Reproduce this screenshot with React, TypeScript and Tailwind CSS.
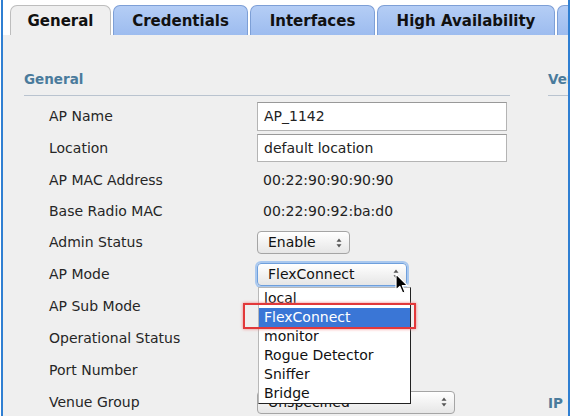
import type { ReactNode } from 'react'

const FONT = { fontFamily: '"DejaVu Sans", Verdana, sans-serif' }

function Arrows() {
  return (
    <svg width="6" height="10" viewBox="0 0 6 10" className="shrink-0">
      <path d="M3 0.5 L5.5 3.8 L0.5 3.8 Z" fill="#555" />
      <path d="M3 9.5 L5.5 6.2 L0.5 6.2 Z" fill="#555" />
    </svg>
  )
}

function Tab({ label, active, width }: { label: string; active?: boolean; width: number }) {
  return (
    <div
      style={{ width }}
      className={`h-[30px] shrink-0 rounded-t-[7px] border border-b-0 flex items-center justify-center pt-[2px] text-[15px] font-bold text-[#111] ${
        active
          ? 'bg-[#efefef] border-[#bdbdbd]'
          : 'bg-gradient-to-b from-[#b4cdf5] to-[#9dbcef] border-[#7d9fd6]'
      }`}
    >
      {label}
    </div>
  )
}

function Row({ label, h = 32, children }: { label: string; h?: number; children?: ReactNode }) {
  return (
    <div className="flex items-center" style={{ height: h }}>
      <div className="w-[233px] pl-[25px] text-[14px] text-[#262626] shrink-0">{label}</div>
      <div className="flex-1 flex items-center">{children}</div>
    </div>
  )
}

function TextBox({ value, h }: { value: string; h: number }) {
  return (
    <div
      style={{ height: h }}
      className="w-[250px] bg-white border border-[#b4b4b4] border-t-[#999] pl-[6px] flex items-center text-[14px] text-[#222]"
    >
      {value}
    </div>
  )
}

function Select({ value, w, focus }: { value: string; w: number; focus?: boolean }) {
  return (
    <div
      style={{ width: w }}
      className={`h-[23px] rounded-[4px] border bg-gradient-to-b from-white to-[#e6e6e6] flex items-center justify-between pl-[10px] pr-[7px] text-[14px] text-[#111] ${
        focus ? 'border-[#6e9fdc] shadow-[0_0_0_2px_#a9c8ef]' : 'border-[#a5a5a5]'
      }`}
    >
      <span>{value}</span>
      <Arrows />
    </div>
  )
}

export default function App() {
  const options = ['local', 'FlexConnect', 'monitor', 'Rogue Detector', 'Sniffer', 'Bridge']
  return (
    <div style={FONT} className="w-[571px] h-[416px] bg-white overflow-hidden">
      <div className="relative ml-px w-[569px] h-full border-x-2 border-[#2f7fd2] flex flex-col overflow-hidden">
        {/* Tabs */}
        <div className="h-[35px] flex items-end gap-[2px] pl-[7px] shrink-0">
          <Tab label="General" active width={101} />
          <Tab label="Credentials" width={135} />
          <Tab label="Interfaces" width={125} />
          <Tab label="High Availability" width={178} />
          <Tab label="Inventory" width={120} />
        </div>

        {/* Panel */}
        <div className="flex-1 bg-[#efefef] flex">
          <div className="w-[486px] ml-[21px] shrink-0">
            <div className="pt-[36px] pb-[8px] border-b border-[#b9c3cf] text-[13.5px] font-bold text-[#4a7b9c] leading-[16px]">
              General
            </div>
            <div className="pt-[4px]">
              <Row label="AP Name">
                <TextBox value="AP_1142" h={29} />
              </Row>
              <Row label="Location">
                <TextBox value="default location" h={28} />
              </Row>
              <Row label="AP MAC Address">
                <span className="pl-[6px] text-[14px] text-[#222]">00:22:90:90:90:90</span>
              </Row>
              <Row label="Base Radio MAC" h={31}>
                <span className="pl-[6px] text-[14px] text-[#222]">00:22:90:92:ba:d0</span>
              </Row>
              <Row label="Admin Status" h={31}>
                <Select value="Enable" w={93} />
              </Row>
              <Row label="AP Mode">
                <div className="relative">
                  <Select value="FlexConnect" w={150} focus />
                  {/* open option list */}
                  <div className="absolute left-px top-[24px] w-[153px] h-[117px] bg-white border border-[#b8b8b8] border-r-[#222] border-b-[#222] pt-px z-20">
                    {options.map(o => (
                      <div
                        key={o}
                        className={`h-[19px] pl-[5px] flex items-center text-[14px] ${
                          o === 'FlexConnect' ? 'bg-[#3a76d6] text-white' : 'text-[#111]'
                        }`}
                      >
                        {o}
                      </div>
                    ))}
                  </div>
                  {/* highlight box */}
                  <div className="absolute left-[-14px] top-[40px] w-[173px] h-[26px] border-2 border-[#e2383a] shadow-[0_0_3px_#f08080] z-30" />
                  {/* mouse pointer */}
                  <svg
                    width="14"
                    height="22"
                    viewBox="0 0 14 22"
                    className="absolute left-[138px] top-[10px] z-40"
                  >
                    <path
                      d="M1 1 L1 17 L4.8 13.4 L7.6 20 L10 19 L7.3 12.6 L12.5 12.6 Z"
                      fill="#000"
                      stroke="#fff"
                      strokeWidth="1.2"
                      strokeLinejoin="round"
                    />
                  </svg>
                </div>
              </Row>
              <Row label="AP Sub Mode" />
              <Row label="Operational Status" />
              <Row label="Port Number" />
              <Row label="Venue Group">
                <Select value="Unspecified" w={198} />
              </Row>
            </div>
          </div>

          {/* Right column (clipped by the frame) */}
          <div className="ml-[38px] w-[60px] shrink-0 flex flex-col">
            <div className="pt-[36px] pb-[8px] border-b border-[#b9c3cf] text-[13.5px] font-bold text-[#4a7b9c] leading-[16px] whitespace-nowrap">
              Versions
            </div>
            <div className="mt-[299px] text-[13.5px] font-bold text-[#4a7b9c] leading-[16px] whitespace-nowrap">
              IP Config
            </div>
          </div>
        </div>
      </div>
    </div>
  )
}
